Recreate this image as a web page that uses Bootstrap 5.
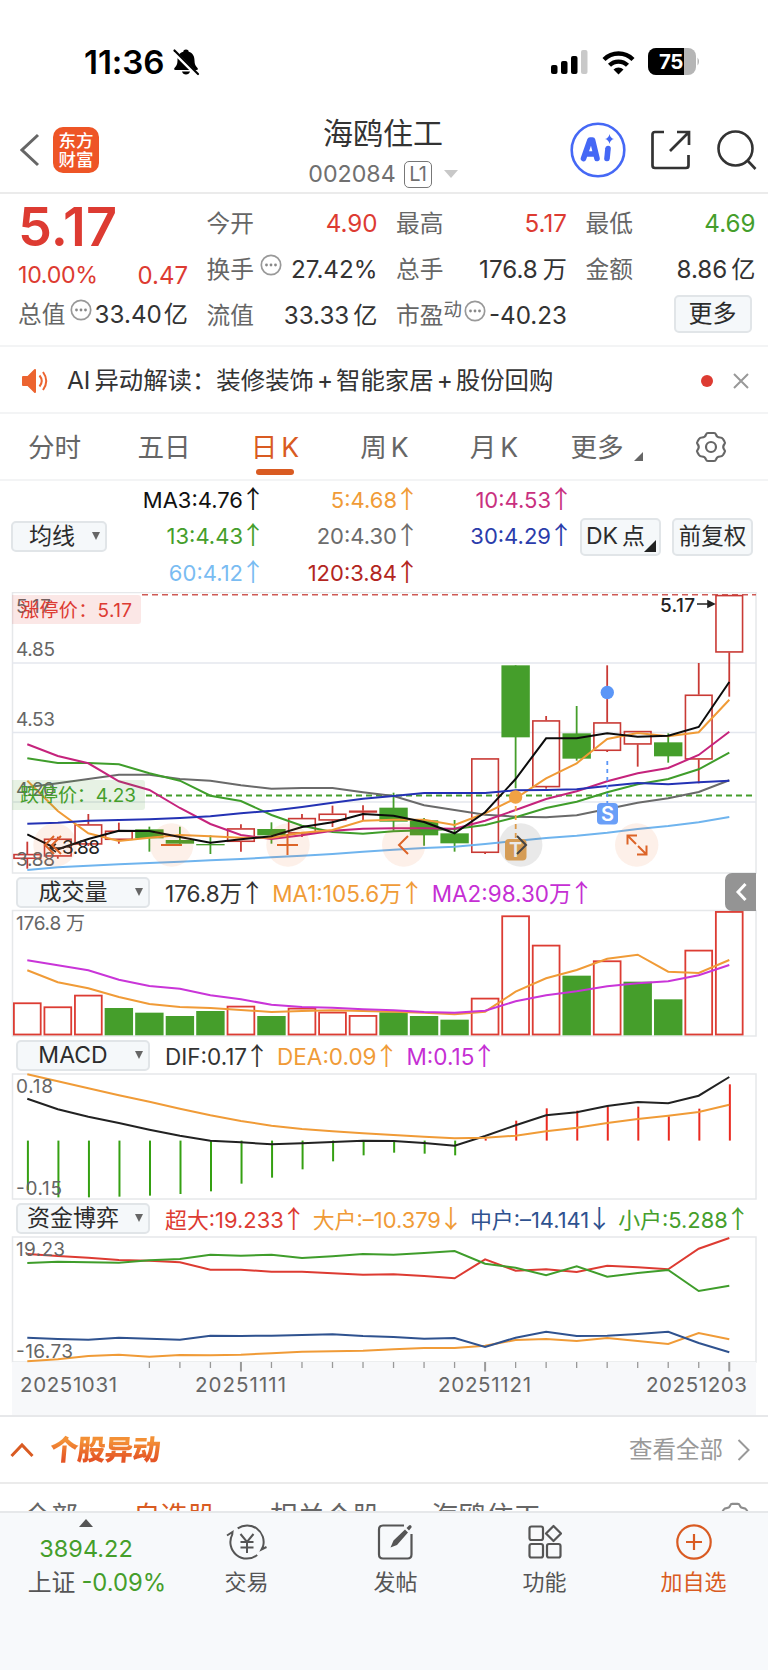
<!DOCTYPE html>
<html lang="zh-CN">
<head>
<meta charset="utf-8">
<meta name="viewport" content="width=device-width, initial-scale=1">
<title>海鸥住工 002084</title>
<link href="https://cdn.jsdelivr.net/npm/bootstrap@5.3.0/dist/css/bootstrap.min.css" rel="stylesheet">
<style>
:root{--ink:#333;--soft:#666;--rise:#dd3b32;--fall:#459e2b;--brand:#d95b22;--amber:#f09b37}
body{font-family:Inter,"Noto Sans CJK SC",sans-serif;color:var(--ink);background:#fff;line-height:1;width:768px;height:1670px;overflow:hidden;font-size:24px}
svg{display:block;flex:none}
.nowrap-all *{white-space:nowrap}
.statusbar{height:96px;padding:22px 66px 0 84px}
.clock{font-size:33.200px;font-weight:600;color:#000;letter-spacing:-.1px;padding-top:2px}
.topnav{height:98px;border-bottom:2px solid #ebebeb;padding:12px 11px 0 20px}
.brandmark{width:46px;height:46px;border-radius:10px;background:#ee5526;color:#fff;font-weight:500;font-size:17.5px;line-height:19px}
.titleblock{width:206px;margin-left:181px;padding-top:9px}
.stockname{font-size:30px;line-height:32px}
.stockcode{font-size:23.2px;color:#707070;line-height:28px;padding-top:11px}
.level{font-size:20px;border:1.5px solid #777;border-radius:5px;width:28px;height:27px;line-height:24px;text-align:center;letter-spacing:-.8px}
.quotes{height:153px;border-bottom:2px solid #f3f4f5;display:grid;grid-template-columns:170px 171px 171px 170px;column-gap:18.5px;padding:0 0 0 18px;font-size:24.2px}
.lastprice{font-size:54px;font-weight:600;height:66px;padding-top:6px;letter-spacing:0}
.qrow{height:46px;display:flex;align-items:center;justify-content:space-between}
.qlab{color:var(--soft);display:flex;align-items:center;font-size:23.700px}
.qlab svg{position:relative;top:-5px}
.unit{font-style:normal;margin-left:2px}
.up{color:var(--rise)}.down{color:var(--fall)}
.softbtn{background:#f5f8fa;border:2px solid #e1e5e8;border-radius:5px;color:#2c2c2c;padding:0;display:flex;flex:none;align-items:center;justify-content:center;line-height:1;white-space:nowrap;font-size:24px}
.notice{height:67px;border-bottom:2px solid #f3f4f5;padding:2px 19px 0 22px}
.plus{font-style:normal;margin:0 3px}
.periods{height:67px;border-bottom:2px solid #f3f4f5;display:grid;grid-template-columns:109px 110px 112px 107px 112px 113px 96px;font-size:26.600px;color:var(--soft)}
.periods>*{display:flex;align-items:center;justify-content:center;position:relative;white-space:nowrap;padding-top:1px}
.periods .on{color:var(--brand)}
.periods .on::after{content:"";position:absolute;left:37px;bottom:4px;width:38px;height:6px;border-radius:3px;background:var(--brand)}
.averages{height:111px;padding:0 0 0 11px}
.magrid{display:grid;grid-template-columns:152px 154px 154px;grid-auto-rows:36.1px;text-align:right;font-size:22px;line-height:36px}
.arr{font-family:"Noto Sans CJK SC",sans-serif;font-size:25px;line-height:1;display:inline-block;width:12px;margin-left:4px;text-indent:-6.500px;overflow:visible;text-align:left;font-style:normal}
.indicator{padding:0 0 0 16px;font-size:22.5px;position:relative}
.pick{width:134px;height:31px;font-size:23px;position:relative;padding-right:20px}
.pick::after,.avg::after{content:"";position:absolute;right:5px;top:9px;border:4.500px solid transparent;border-top:8px solid #666;border-bottom:0}
.values{margin-left:15px;display:flex;align-items:center;white-space:nowrap}
.values>*+*{margin-left:14px}
.flows{font-size:21.900px}
.flows>*+*{margin-left:13px}
.plot text{font-size:19px;fill:#666}
.drawer{position:absolute;right:12px;top:-2px;width:31px;height:38px;background:#949494;border-radius:7px 0 0 7px}
.news{height:69px;border-top:2px solid #e7e8ea;border-bottom:2px solid #ebebeb;padding:0 18px 0 10px}
.newstitle{font-size:28.300px;font-weight:900;transform:skewX(-5deg);background:linear-gradient(#f39036 25%,#e55626 75%);-webkit-background-clip:text;background-clip:text;color:transparent;line-height:36px;letter-spacing:-.8px}
.filters{height:27px;overflow:hidden;color:var(--soft);padding:19px 0 0 24px;font-size:27.500px;line-height:27px}
.filters span{flex:none}
.dock{height:159px;background:#f7f9fb;border-top:2px solid #e6e8ea;display:grid;grid-template-columns:172px 149px 149px 149px 149px;font-size:22px;color:#555}
.dock>div{display:flex;flex-direction:column;align-items:center}
.dock svg{margin:11px 0 11px}
</style>
</head>
<body class="nowrap-all">
<div class="statusbar d-flex justify-content-between">
  <div class="d-flex align-items-center" style="height:80px">
    <span class="clock">11:36</span>
    <svg style="margin-left:7px" width="28" height="28" viewBox="0 0 28 28"><path fill="#000" d="M14 1.500c-2 0-2.600 1-2.700 2.200C7 5 5.500 8.500 5.500 12.500c0 4-1.200 5.500-3 7.500-.8 1-.3 2 1 2h21c1.300 0 1.800-1 1-2-1.800-2-3-3.500-3-7.500 0-4-1.500-7.500-5.800-8.800C16.600 2.500 16 1.500 14 1.500zM10 23.500h8c-.5 2-2 3-4 3s-3.500-1-4-3z"/><path d="M1 3 25 27" stroke="#fff" stroke-width="4"/><path d="M2.500 2.500 26 26" stroke="#000" stroke-width="2.200" stroke-linecap="round"/></svg>
  </div>
  <div class="d-flex align-items-center" style="height:80px">
    <svg width="37" height="24" viewBox="0 0 37 24"><rect y="15" width="6.500" height="9" rx="2"/><rect x="10" y="11" width="6.500" height="13" rx="2"/><rect x="20" y="6" width="6.500" height="18" rx="2"/><rect x="30" width="6.500" height="24" rx="2" fill="#c9c9c9"/></svg>
    <svg style="margin-left:14px" width="33" height="25" viewBox="0 0 33 25"><g fill="none" stroke="#000" stroke-width="4.300"><path d="M2 9.500a20.500 20.500 0 0 1 29 0"/><path d="M7.500 15.300a12.700 12.700 0 0 1 18 0"/></g><path d="M16.500 24.500 11.500 19.500a7 7 0 0 1 10 0z"/></svg>
    <svg style="margin-left:13px" width="54" height="28" viewBox="0 0 54 28"><defs><clipPath id="cell"><rect width="48" height="27" rx="8"/></clipPath></defs><g clip-path="url(#cell)"><rect width="48" height="27" fill="#b5b5b5"/><rect width="36" height="27"/></g><path d="M49.500 9.500q3 4 0 8z" fill="#b5b5b5"/><text x="23" y="20.700" text-anchor="middle" font-size="20.500" font-weight="700" fill="#fff" letter-spacing="-.3">75</text></svg>
  </div>
</div>
<header class="topnav d-flex align-items-center">
  <svg width="20" height="34" viewBox="0 0 20 34"><path d="M18 2 2 17 18 32" fill="none" stroke="#666" stroke-width="3"/></svg>
  <div class="brandmark text-center d-flex flex-column justify-content-center" style="margin-left:13px"><span>东方</span><span>财富</span></div>
  <div class="titleblock text-center align-self-start">
    <div class="stockname">海鸥住工</div>
    <div class="stockcode d-flex align-items-center justify-content-center"><span>002084</span><span class="level ms-2">L1</span><svg style="margin-left:12px" width="14" height="8"><path d="M0 0h14L7 8z" fill="#c8c8c8"/></svg></div>
  </div>
  <svg class="ms-auto" width="56" height="56" viewBox="0 0 56 56"><circle cx="28" cy="28" r="26.300" fill="none" stroke="#4568f5" stroke-width="2.600"/><g fill="none" stroke="#4568f5" stroke-width="5.600" stroke-linecap="round" stroke-linejoin="round"><path d="M13.500 36.500 20 18h2.500L27 36.500M16.500 32h8"/><path d="M38 26.500 37 36.500"/></g><path d="M39.500 12q.8 4.200 4.500 5-3.700.8-4.500 5-.8-4.200-4.500-5 3.700-.8 4.500-5z" fill="#4568f5"/></svg>
  <svg style="margin-left:25px" width="40" height="40" viewBox="0 0 40 40"><path d="M13 2H4Q1.500 2 1.500 4.500v31Q1.500 38 4 38h31q2.500 0 2.500-2.500V25M26 2h12v13M37 3 19 21" fill="none" stroke="#333" stroke-width="2.700"/></svg>
  <svg style="margin-left:26px" width="40" height="40" viewBox="0 0 40 40"><circle cx="18.500" cy="18.500" r="17" fill="none" stroke="#333" stroke-width="2.600"/><path d="m30.500 30.500 8 8.500" stroke="#333" stroke-width="2.600"/></svg>
</header>
<section class="quotes">
  <div><div class="lastprice up">5.17</div>
    <div class="qrow up" style="height:31px;font-size:23.200px"><span style="letter-spacing:-.3px">10.00%</span><span style="font-size:24px">0.47</span></div>
    <div class="qrow" style="height:48px"><span class="qlab">总值<svg style="margin-left:5px" width="22" height="22" viewBox="0 0 22 22"><use href="#more"/></svg></span><span>33.40<i class="unit">亿</i></span></div></div>
  <div style="padding-top:7px"><div class="qrow"><span class="qlab">今开</span><span class="up">4.90</span></div>
    <div class="qrow"><span class="qlab">换手<svg style="margin-left:6px" width="22" height="22" viewBox="0 0 22 22"><use href="#more"/></svg></span><span>27.42%</span></div>
    <div class="qrow"><span class="qlab">流值</span><span>33.33<i class="unit ms-1">亿</i></span></div></div>
  <div style="padding-top:7px"><div class="qrow"><span class="qlab">最高</span><span class="up">5.17</span></div>
    <div class="qrow"><span class="qlab">总手</span><span>176.8<i class="unit" style="margin-left:5px">万</i></span></div>
    <div class="qrow"><span class="qlab">市盈<span style="font-size:18.500px;padding-bottom:14px">动</span><svg style="margin-left:2px" width="22" height="22" viewBox="0 0 22 22"><use href="#more"/></svg></span><span>-40.23</span></div></div>
  <div style="padding-top:7px"><div class="qrow"><span class="qlab">最低</span><span class="down">4.69</span></div>
    <div class="qrow"><span class="qlab">金额</span><span>8.86<i class="unit ms-1">亿</i></span></div>
    <div class="qrow justify-content-end" style="height:42px"><button class="softbtn" style="width:78px;height:38px;margin-right:4px">更多</button></div></div>
</section>
<section class="notice d-flex align-items-center">
  <svg width="26" height="30" viewBox="0 0 26 30"><path d="M1 11h5l7-7v22l-7-7H1z" fill="#ec6430" stroke="#ec6430" stroke-linejoin="round" stroke-width="2"/><path d="M17.500 9.500q4.500 5.500 0 11M21 6q6.500 9 0 18" fill="none" stroke="#ec6430" stroke-width="2"/></svg>
  <span style="margin-left:19px;font-size:24.400px">AI<i class="fst-normal" style="margin-left:4px">异动解读：</i>装修装饰<i class="plus">+</i>智能家居<i class="plus">+</i>股份回购</span>
  <svg class="ms-auto" width="12" height="12"><circle cx="6" cy="6" r="6" fill="#dd3b32"/></svg>
  <svg style="margin-left:20px" width="16" height="16"><path d="m1 1 14 14M15 1 1 15" stroke="#999" stroke-width="2"/></svg>
</section>
<nav class="periods">
  <span>分时</span><span>五日</span><span class="on">日<i class="fst-normal" style="margin-left:4px">K</i></span><span>周<i class="fst-normal" style="margin-left:4px">K</i></span><span>月<i class="fst-normal" style="margin-left:4px">K</i></span>
  <span>更多<svg style="margin:18px 0 0 10px" width="9" height="9"><path d="M9 0v9H0z" fill="#666"/></svg></span>
  <span><svg width="32" height="32" viewBox="-16 -16 32 32"><use href="#gear"/></svg></span>
</nav>
<section class="averages d-flex align-items-center">
  <button class="softbtn avg position-relative" style="width:96px;height:31px;font-size:23px;padding-left:6px;padding-right:20px">均线</button>
  <div class="magrid">
    <span style="color:#111">MA3:4.76<i class="arr">↑</i></span><span style="color:#f09b37">5:4.68<i class="arr">↑</i></span><span style="color:#c9317f">10:4.53<i class="arr">↑</i></span>
    <span style="color:#459e2b">13:4.43<i class="arr">↑</i></span><span style="color:#6c6c6c">20:4.30<i class="arr">↑</i></span><span style="color:#2b3cab">30:4.29<i class="arr">↑</i></span>
    <span style="color:#7abcf2">60:4.12<i class="arr">↑</i></span><span style="color:#b3261f">120:3.84<i class="arr">↑</i></span>
  </div>
  <button class="softbtn position-relative" style="width:81px;height:38px;margin-left:13px;padding-right:10px;font-size:23px">DK<i class="fst-normal ms-1">点</i><svg class="position-absolute" style="right:3px;bottom:2px" width="12" height="12"><path d="M12 0v12H0z" fill="#222"/></svg></button>
  <button class="softbtn" style="width:81px;height:38px;margin-left:11px;font-size:22.500px">前复权</button>
</section>
<svg class="plot" id="kline" width="768" height="283" viewBox="0 592 768 283"></svg>
<div class="indicator d-flex align-items-center" style="height:34px"><button class="softbtn pick">成交量</button>
  <div class="values"><span>176.8万<i class="arr">↑</i></span><span style="color:#f09b37">MA1:105.6万<i class="arr">↑</i></span><span style="color:#c52fd4">MA2:98.30万<i class="arr">↑</i></span></div>
  <div class="drawer d-flex align-items-center justify-content-center"><svg width="12" height="20"><path d="M10.500 2 3 10l7.500 8" fill="none" stroke="#fff" stroke-width="3"/></svg></div></div>
<svg class="plot" id="volume" width="768" height="129" viewBox="0 909 768 129"></svg>
<div class="indicator d-flex align-items-center" style="height:35px"><button class="softbtn pick">MACD</button>
  <div class="values"><span>DIF:0.17<i class="arr">↑</i></span><span style="color:#f09b37">DEA:0.09<i class="arr">↑</i></span><span style="color:#c52fd4">M:0.15<i class="arr">↑</i></span></div></div>
<svg class="plot" id="macd" width="768" height="128" viewBox="0 1073 768 128"></svg>
<div class="indicator d-flex align-items-center" style="height:35px"><button class="softbtn pick">资金博弈</button>
  <div class="values flows"><span style="color:#dd3b32">超大:19.233<i class="arr">↑</i></span><span style="color:#f09b37">大户:–10.379<i class="arr">↓</i></span><span style="color:#2f528f">中户:–14.141<i class="arr">↓</i></span><span style="color:#459e2b">小户:5.288<i class="arr">↑</i></span></div></div>
<svg class="plot" id="funds" width="768" height="179" viewBox="0 1236 768 179"></svg>
<section class="news d-flex align-items-center">
  <svg width="24" height="16"><path d="M1.500 14 12 3l10.500 11" fill="none" stroke="#d95b22" stroke-width="3"/></svg>
  <div class="newstitle" style="margin-left:16px">个股异动</div>
  <span class="ms-auto" style="color:#999;font-size:23.500px">查看全部</span>
  <svg style="margin-left:14px" width="13" height="22"><path d="m1.500 1 10 10-10 10" fill="none" stroke="#999" stroke-width="2"/></svg>
</section>
<div class="filters d-flex"><span style="width:109px;font-size:27px">全部</span><span style="width:137px;color:var(--brand)">自选股</span><span style="width:161px">相关个股</span><span style="width:289px">海鸥住工</span>
<svg style="margin-top:-1px" width="30" height="30" viewBox="-16 -16 32 32"><use href="#gear" opacity=".75"/></svg></div>
<footer class="dock">
  <div><svg style="margin:6px 0 10px" width="14" height="8"><path d="M0 8 7 0l7 8z" fill="#555"/></svg><span class="down" style="font-size:23.500px;margin-bottom:10px">3894.22</span><span class="down" style="font-size:23.800px;padding-left:22px"><i class="fst-normal" style="color:#555;margin-right:6px">上证</i>-0.09%</span></div>
  <div><svg width="42" height="36" viewBox="0 0 42 36"><g fill="none" stroke="#555" stroke-width="2"><path d="M11.700 4.400A16.500 16.500 0 0 1 37 22.500l-1.500 3 5-2.500M31.200 31A16.500 16.500 0 0 1 6.200 10.600L6.500 8 1 11.500"/><path d="m14.500 10 6.500 8 6.500-8M21 18v11M14.500 18h13M14.500 23.500h13"/></g></svg>交易</div>
  <div><svg width="38" height="36" viewBox="0 0 38 36"><path d="M27 1.500H6Q2 1.500 2 5.500v25Q2 34.500 6 34.500h24.500Q34.500 34.500 34.500 30.500V10" fill="none" stroke="#555" stroke-width="2.200"/><path d="m13.500 23.500 3-7L28 5.500l3 3-11 12.500z M29.500 4l2.500-2.500q1-1 2 0t.5 2L32 6.500z" fill="#555"/></svg>发帖</div>
  <div><svg width="34" height="36" viewBox="0 0 34 36"><g fill="none" stroke="#555" stroke-width="2.200"><rect x="1.500" y="2.500" width="13.500" height="13.500" rx="2"/><rect x="1.500" y="20" width="13.500" height="13.500" rx="2"/><rect x="19" y="20" width="13.500" height="13.500" rx="2"/><path d="M25.500 2 33 9.500 25.500 17 18 9.500z" stroke-linejoin="round"/></g></svg>功能</div>
  <div style="color:var(--brand)"><svg width="38" height="36" viewBox="0 0 38 36"><g fill="none" stroke="#d95b22" stroke-width="2.200"><circle cx="19" cy="18" r="16.700"/><path d="M19 10v16M11 18h16"/></g></svg>加自选</div>
</footer>
<svg width="0" height="0" class="position-absolute"><defs>
  <g id="more"><circle cx="11" cy="11" r="9.700" fill="none" stroke="#999" stroke-width="1.700"/><circle cx="6.500" cy="11" r="1.400" fill="#888"/><circle cx="11" cy="11" r="1.400" fill="#888"/><circle cx="15.500" cy="11" r="1.400" fill="#888"/></g>
  <g id="gear" fill="none" stroke="#666" stroke-width="2.200" stroke-linejoin="round"><path d="M-3-14h6q1.500 0 2 1.500.8 3 4 3 2 0 3 1.500l1.500 2.500q1 1.500 0 2.500-2.500 3 0 6 1 1 0 2.500L12 8q-1 1.500-3 1.500-3.200 0-4 3-.5 1.500-2 1.500h-6q-1.500 0-2-1.500-.8-3-4-3-2 0-3-1.500l-1.500-2.500q-1-1.500 0-2.500 2.500-3 0-6-1-1 0-2.500L-12-8q1-1.500 3-1.500 3.200 0 4-3 .5-1.500 2-1.500z"/><circle r="5"/></g>
</defs></svg>
<script src="https://cdn.jsdelivr.net/npm/bootstrap@5.3.0/dist/js/bootstrap.bundle.min.js"></script>
<script>
const RED='#c93a35', GREEN='#459e2b', X=i=>27.3+i*30.52;
const box=(y,h)=>`<rect x="12.500" y="${y}" width="743.500" height="${h}" fill="none" stroke="#e6e8ea" stroke-width="1.500"/>`;
const line=(base,v,c,w=2)=>`<polyline points="${v.map((p,i)=>X(i).toFixed(1)+','+(base+p/3).toFixed(1)).join(' ')}" fill="none" stroke="${c}" stroke-width="${w}"/>`;
const seg=(x1,y1,x2,y2,c,w,extra='')=>`<path d="M${x1} ${y1}L${x2} ${y2}" stroke="${c}" stroke-width="${w}" fill="none" ${extra}/>`;
const txt=(x,y,s,len,extra='')=>`<text x="${x}" y="${y}" ${len?`textLength="${len}"`:''} ${extra}>${s}</text>`;

/* candles: colour, high, body top, body bottom, low */
const candles=[['r',785,822,836,866],['r',770,776,829,836],['r',702,733,793,798],['r',728,752,779,791],['g',740,748,775,815],['g',740,780,791,791],['g',766,792,796,822],['r',733,745,785,815],['g',727,747,766,791],['r',702,714,760,771],['r',677,701,721,741],['r',676,692,697,722],['g',638,683,725,752],['g',714,721,766,797],['g',720,760,790,815],['r',535,535,818,822],['g',256,256,472,625],['r',408,421,621,626],['g',378,460,536,542],['r',256,427,512,516],['r',453,453,493,560],['g',460,487,529,548],['r',249,344,538,610],['r',45,45,217,350]];
let k=box(592.5,280.5);
[663,732.5,802].forEach(y=>k+=seg(12,y,756,y,'#e4e7ee',1.6));
k+=seg(142,594.8,756,594.8,'#cf5a55',1.4,'stroke-dasharray="6 4"');
k+=seg(146,795.5,756,795.5,GREEN,2,'stroke-dasharray="6 4"');
candles.forEach(([t,h,a,b,l],i)=>{
  const c=t=='r'?RED:GREEN,x=X(i),y=v=>580+v/3;
  if(t=='g'){k+=seg(x,y(h),x,y(l),c,1.8)+`<rect x="${x-14.2}" y="${y(a)}" width="28.400" height="${(b-a)/3}" fill="${c}"/>`}
  else{k+=seg(x,y(h),x,y(a),c,1.8)+seg(x,y(b),x,y(l),c,1.8)+`<rect x="${x-13.3}" y="${y(a)+.6}" width="26.600" height="${(b-a)/3-1}" fill="none" stroke="${c}" stroke-width="1.600"/>`}
});
k+=line(580,[870,862,857,853,849,845,841,837,832,827,822,815,809,804,800,792,783,774,767,758,747,738,727,711],'#6fb4ee')
+line(580,[622,610,597,584,584,597,602,616,626,624,624,637,648,676,690,704,710,712,706,687,668,655,636,601],'#6a6a6a')
+line(580,[535,549,549,553,580,602,647,663,705,737,756,761,754,751,747,735,712,684,665,637,613,597,568,518],'#3f9d2b')
+line(580,[493,528,550,604,630,684,732,765,777,766,752,746,745,745,746,722,690,657,634,604,580,564,525,455],'#c5237c')
+line(580,[602,693,760,783,773,765,769,773,773,758,750,722,719,719,735,700,655,595,550,477,459,469,457,359],'#f09b37')
+line(580,[763,808,777,752,753,771,788,778,769,741,727,702,707,726,760,697,597,475,475,460,470,467,441,306],'#0c0c0c')
+line(580,[731,728,722,720,718,714,709,700,692,681,668,656,648,639,639,639,631,630,628,618,609,613,607,602],'#2432b4');
k+=txt(16,613,'5.17',35)+txt(16,656,'4.85',39)+txt(16,726,'4.53',39)+txt(16,795.5,'4.20',39)+txt(16,866,'3.88',39);
k+=`<path d="M12 595h126q3 0 3 3v23q0 3-3 3H12z" fill="#dd3b32" opacity=".12"/><path d="M12 780h130q3 0 3 3v24q0 3-3 3H12z" fill="#459e2b" opacity=".13"/>`;
k+=txt(20,617,'涨停价：5.17',112,'style="fill:#dd3b32"')+txt(20,802,'跌停价：4.23',116,'style="fill:#459e2b"');
k+=txt(62,854,'3.88',38,'style="fill:#222"')+`<path d="M64 848H50m6-4-6 4 6 4" stroke="#222" stroke-width="1.600" fill="none"/>`;
k+=txt(660,611.5,'5.17',35,'style="fill:#222;font-weight:500"')+`<path d="M697 604h16M708 601l6 3-6 3z" stroke="#222" stroke-width="1.600" fill="#222"/>`;
k+=seg(515.7,797,515.7,840,'#f0a243',1.8,'stroke-dasharray="5 4"')+`<circle cx="515.600" cy="797" r="6.700" fill="#f0a243"/><rect x="505" y="839" width="21.500" height="21.500" rx="4" fill="#e8a44f"/>`+txt(515.7,857,'T',0,'text-anchor="middle" style="fill:#fff;font-weight:600;font-size:20px"');
k+=seg(607.3,761,607.3,803,'#5b96f7',1.8,'stroke-dasharray="4 4"')+`<circle cx="607.300" cy="692.500" r="6.700" fill="#5b96f7"/><rect x="597" y="803" width="21" height="21.500" rx="4" fill="#6a9ff8"/>`+txt(607.5,821,'S',0,'text-anchor="middle" style="fill:#fff;font-weight:600;font-size:20px"');
/* floating chart controls */
[55,171.7,288,403.7,520.7,636.7].forEach((x,i)=>k+=`<circle cx="${x}" cy="845" r="21.700" fill="${i==4?'#777':'#e86a2c'}" opacity="${i==4?.16:.1}"/>`);
k+=`<g fill="none" stroke="#dc6428" stroke-width="2"><path d="M54 836l-9 9 9 9M61 836l-9 9 9 9M161 845h21M277 845h21M287.500 834v21M408 836l-9 9 9 9M637 835.500h-9.500v9M628 836l8 8M637 854.500h9.500v-9M646 854l-8-8"/><path d="M517 836l9 9-9 9" stroke="#444"/></g>`;
kline.innerHTML=k;

/* volume */
let v=box(910.5,125.5);
const kinds='rrrggggrgrrrgggrrrgrggrr';
[398,410,375,414,428,438,423,408,438,414,426,436,427,438,449,384,137,225,317,272,335,388,240,124].forEach((t,i)=>{
  const x=X(i),y=870+t/3,h=1035.3-y;
  v+=kinds[i]=='g'?`<rect x="${x-14.2}" y="${y}" width="28.400" height="${h}" fill="${GREEN}"/>`:`<rect x="${x-13.4}" y="${y+.6}" width="26.800" height="${h-1.4}" fill="none" stroke="#dc3c33" stroke-width="1.800"/>`});
v+=line(870,[301,337,355,381,402,411,414,420,426,423,421,423,425,428,433,425,365,325,300,266,254,305,309,270],'#f09b37')
+line(870,[271,286,301,329,348,356,376,388,404,411,413,418,421,426,428,422,394,376,364,349,340,334,316,285],'#c935d8')+txt(16,930,'176.8 万',69);
volume.innerHTML=v;

/* MACD */
let m=box(1074,125);
[450,472,472,470,467,462,454,431,413,388,364,346,338,341,346,296,242,205,212,199,200,229,206,133].forEach((t,i)=>m+=seg(X(i)+.6,1140.6,X(i)+.6,1040+t/3,i<15?'#35a012':'#ea2a20',2));
m+=line(1040,[176,208,230,249,269,287,302,307,313,310,306,302,303,309,317,288,256,226,217,198,186,190,167,111],'#222')
+line(1040,[103,124,145,166,185,206,226,243,257,267,274,280,285,290,295,293,287,274,263,249,237,227,216,194],'#f09b37')+txt(16,1093,'0.18',37)+txt(16,1195,'-0.15',46);
macd.innerHTML=m;

/* fund flows and date axis */
let f=box(1237,125)+`<rect x="12" y="1362" width="744" height="54" fill="#f7f8fa"/>`;
for(let i=4;i<24;i++){const big=i%8==7;f+=seg(X(i),1362,X(i),big?1371.5:1368,'#999',big?2:1.3)}
f+=line(1200,[162,168,173,180,182,187,209,209,215,215,220,224,223,228,235,178,212,208,216,197,202,208,146,114],'#dd3b32')
+line(1200,[189,185,187,188,181,177,164,167,164,174,169,162,164,159,153,191,203,226,199,230,219,210,273,257],'#3f9d2b')
+line(1200,[484,478,468,464,470,465,466,464,460,455,454,452,448,444,444,437,420,417,423,414,423,432,399,418],'#f09b37')
+line(1200,[413,417,419,413,416,419,407,408,407,405,403,408,411,416,414,441,413,395,408,407,402,395,429,457],'#2f528f')
+txt(16,1256,'19.23',49)+txt(16,1358,'-16.73',57)
+[[20,'20251031',97],[195,'20251111',91],[438,'20251121',93],[646,'20251203',101]].map(a=>txt(a[0],1392,a[1],a[2],'style="font-size:20.500px"')).join('');
funds.innerHTML=f;
</script>
</body>
</html>
